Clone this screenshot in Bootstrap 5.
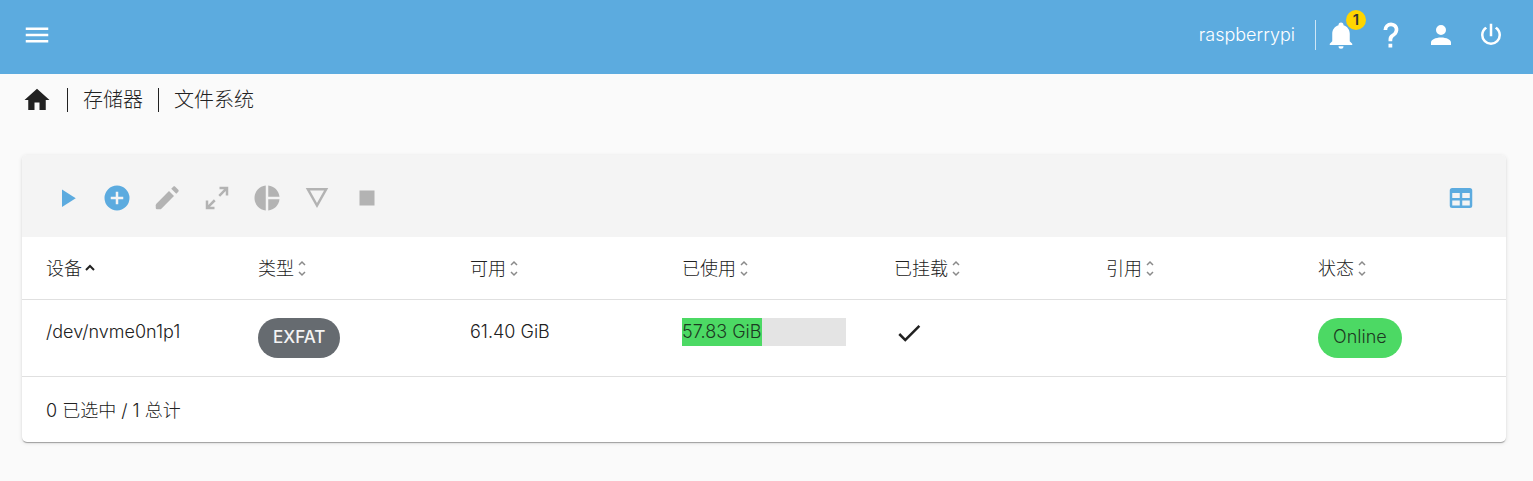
<!DOCTYPE html>
<html lang="zh-CN">
<head>
<meta charset="utf-8">
<meta name="viewport" content="width=device-width, initial-scale=1">
<title>文件系统 - raspberrypi</title>
<link rel="stylesheet" href="https://cdn.jsdelivr.net/npm/bootstrap@5.3.0/dist/css/bootstrap.min.css">
<style>
  body { background: #fafafa; color: #212121; font-family: Inter, "Noto Sans CJK SC", sans-serif; font-size: 18px; line-height: 28px; font-weight: 300; }
  .icon { width: 30px; height: 30px; fill: currentColor; display: block; flex: none; }
  .icon-btn { width: 50px; height: 50px; padding: 10px; border: 0; background: none; color: inherit; position: relative; }
  .icon-btn:disabled { color: #b3b3b3; }
  .topbar { background: #5cabdf; color: #fff; padding: 10px 17px 14px 12px; }
  .host { padding-right: 20px; }
  .host-rule { width: 1px; height: 30px; background: rgba(255,255,255,.7); }
  .count { position: absolute; top: 0; right: 0; width: 20px; height: 20px; border-radius: 50%; background: #ffd500; color: #333; font-size: 15px; line-height: 20px; font-weight: 600; }
  .crumbs { font-size: 20px; line-height: 30px; padding: 11px 22px 0; gap: 15px; }
  .crumbs a { color: inherit; text-decoration: none; }
  .crumbs .rule { width: 1px; height: 24px; background: #212121; }
  .panel { margin: 40px 27px 38px 22px; background: #fff; border-radius: 5px; box-shadow: 0 2px 1px -1px rgba(0,0,0,.2), 0 1px 1px rgba(0,0,0,.14), 0 1px 4px rgba(0,0,0,.12); }
  .tools { background: #f4f4f4; padding: 18px 20px 14px; border-radius: 5px 5px 0 0; }
  .accent { color: #5cabdf; }
  .fs-table { table-layout: fixed; width: 100%; border-collapse: collapse; }
  .fs-table th, .fs-table td { padding: 18px 24px; border-bottom: 1px solid #e0e0e0; font-weight: 300; vertical-align: top; }
  .fs-table th { padding: 18px 24px 16px; }
  .sort { border: 0; padding: 0; background: none; color: inherit; font-weight: inherit; display: flex; align-items: center; gap: 2px; }
  .sort svg { width: 12px; height: 18px; fill: none; stroke: #8a8a8a; stroke-width: 1.5; }
  .sort .on { stroke: #212121; stroke-width: 2; }
  .pill { display: block; width: fit-content; height: 40px; line-height: 38px; border-radius: 20px; padding: 0 15px; }
  .pill-type { background: #666b70; color: #f4f4f4; font-size: 17px; font-weight: 500; }
  .pill-online { background: #4cd964; color: #1d3a22; }
  .usage { position: relative; height: 28px; background: #e4e4e4; }
  .usage-fill { position: absolute; inset: 0 auto 0 0; background: #4cd964; }
  .usage-text { position: relative; color: #1d3a22; }
  .summary { padding: 20px 24px 17px; }
</style>
</head>
<body>
<header class="topbar d-flex align-items-center">
  <button class="icon-btn me-auto" aria-label="菜单"><svg class="icon" viewBox="0 0 24 24"><path d="M3 6h18v2H3V6m0 5h18v2H3v-2m0 5h18v2H3v-2Z"/></svg></button>
  <span class="host">raspberrypi</span>
  <span class="host-rule"></span>
  <button class="icon-btn" aria-label="通知"><svg class="icon" viewBox="0 0 24 24"><path d="M21,19V20H3V19L5,17V11C5,7.9 7.03,5.17 10,4.29C10,4.19 10,4.1 10,4A2,2 0 0,1 12,2A2,2 0 0,1 14,4C14,4.1 14,4.19 14,4.29C16.97,5.17 19,7.9 19,11V17L21,19M14,21A2,2 0 0,1 12,23A2,2 0 0,1 10,21"/></svg><span class="count">1</span></button>
  <button class="icon-btn" aria-label="帮助"><svg class="icon" viewBox="0 0 24 24"><path d="M10,19H13V22H10V19M12,2C17.35,2.22 19.68,7.62 16.5,11.67C15.67,12.67 14.33,13.33 13.67,14.17C13,15 13,16 13,17H10C10,15.33 10,13.92 10.67,12.92C11.33,11.92 12.67,11.33 13.5,10.67C15.92,8.43 15.32,5.26 12,5A3,3 0 0,0 9,8H6A6,6 0 0,1 12,2Z"/></svg></button>
  <button class="icon-btn" aria-label="用户"><svg class="icon" viewBox="0 0 24 24"><path d="M12,4A4,4 0 0,1 16,8A4,4 0 0,1 12,12A4,4 0 0,1 8,8A4,4 0 0,1 12,4M12,14C16.42,14 20,15.79 20,18V20H4V18C4,15.79 7.58,14 12,14Z"/></svg></button>
  <button class="icon-btn" aria-label="电源"><svg class="icon" viewBox="0 0 24 24"><path d="M16.56,5.44L15.11,6.89C16.84,7.94 18,9.83 18,12A6,6 0 0,1 6,12C6,9.83 7.16,7.94 8.88,6.88L7.44,5.44C5.36,6.88 4,9.28 4,12A8,8 0 0,0 20,12C20,9.28 18.64,6.88 16.56,5.44M13,3H11V13H13"/></svg></button>
</header>

<nav class="crumbs d-flex align-items-center" aria-label="路径">
  <a href="#" aria-label="主页"><svg class="icon" viewBox="0 0 24 24"><path d="M10,20V14H14V20H19V12H22L12,3L2,12H5V20H10Z"/></svg></a>
  <span class="rule"></span>
  <a href="#">存储器</a>
  <span class="rule"></span>
  <a href="#">文件系统</a>
</nav>

<main class="panel">
  <div class="tools d-flex">
    <button class="icon-btn accent" aria-label="挂载"><svg class="icon" viewBox="0 0 24 24"><path d="M8,5.14V19.14L19,12.14L8,5.14Z"/></svg></button>
    <button class="icon-btn accent" aria-label="创建"><svg class="icon" viewBox="0 0 24 24"><path d="M17,13H13V17H11V13H7V11H11V7H13V11H17M12,2A10,10 0 0,0 2,12A10,10 0 0,0 12,22A10,10 0 0,0 22,12A10,10 0 0,0 12,2Z"/></svg></button>
    <button class="icon-btn" disabled aria-label="编辑"><svg class="icon" viewBox="0 0 24 24"><path d="M16.84,2.73C16.45,2.73 16.07,2.88 15.77,3.17L13.65,5.29L18.95,10.6L21.07,8.5C21.67,7.89 21.67,6.94 21.07,6.36L17.9,3.17C17.6,2.88 17.22,2.73 16.84,2.73Z" transform="translate(5 .6) scale(.76)"/><path d="M13.6 6.4L3.5 16.5Q3 17 3 17.7V20Q3 21 4 21H6.3Q7 21 7.5 20.5L17.6 10.4Z"/></svg></button>
    <button class="icon-btn" disabled aria-label="扩展"><svg class="icon" viewBox="0 0 24 24"><path d="M10,21V19H6.41L10.91,14.5L9.5,13.09L5,17.59V14H3V21H10M14.5,10.91L19,6.41V10H21V3H14V5H17.59L13.09,9.5L14.5,10.91Z"/></svg></button>
    <button class="icon-btn" disabled aria-label="配额"><svg class="icon" viewBox="0 0 24 24"><path d="M11,2V22C5.9,21.5 2,17.2 2,12C2,6.8 5.9,2.5 11,2M13,2V11H22C21.5,6.2 17.8,2.5 13,2M13,13V22C17.7,21.5 21.5,17.8 22,13H13Z"/></svg></button>
    <button class="icon-btn" disabled aria-label="详情"><svg class="icon" viewBox="0 0 24 24"><path d="M6.38,6H17.63L12,16L6.38,6M3,4L12,20L21,4H3Z"/></svg></button>
    <button class="icon-btn" disabled aria-label="卸载"><svg class="icon" viewBox="0 0 24 24"><path d="M18,18H6V6H18V18Z"/></svg></button>
    <button class="icon-btn accent ms-auto" aria-label="列"><svg class="icon" viewBox="0 0 24 24"><path d="M5,4H19A2,2 0 0,1 21,6V18A2,2 0 0,1 19,20H5A2,2 0 0,1 3,18V6A2,2 0 0,1 5,4M5,8V12H11V8H5M13,8V12H19V8H13M5,14V18H11V14H5M13,14V18H19V14H13Z"/></svg></button>
  </div>
  <table class="fs-table">
    <thead><tr>
      <th scope="col"><button class="sort">设备<svg class="on" viewBox="0 0 12 18"><path d="M2 10l4-4 4 4"/></svg></button></th>
      <th scope="col"><button class="sort">类型<svg viewBox="0 0 12 18"><path d="M3 5l3-3 3 3M3 12l3 3 3-3"/></svg></button></th>
      <th scope="col"><button class="sort">可用<svg viewBox="0 0 12 18"><path d="M3 5l3-3 3 3M3 12l3 3 3-3"/></svg></button></th>
      <th scope="col"><button class="sort">已使用<svg viewBox="0 0 12 18"><path d="M3 5l3-3 3 3M3 12l3 3 3-3"/></svg></button></th>
      <th scope="col"><button class="sort">已挂载<svg viewBox="0 0 12 18"><path d="M3 5l3-3 3 3M3 12l3 3 3-3"/></svg></button></th>
      <th scope="col"><button class="sort">引用<svg viewBox="0 0 12 18"><path d="M3 5l3-3 3 3M3 12l3 3 3-3"/></svg></button></th>
      <th scope="col"><button class="sort">状态<svg viewBox="0 0 12 18"><path d="M3 5l3-3 3 3M3 12l3 3 3-3"/></svg></button></th>
    </tr></thead>
    <tbody><tr>
      <td>/dev/nvme0n1p1</td>
      <td><span class="pill pill-type">EXFAT</span></td>
      <td>61.40 GiB</td>
      <td><div class="usage"><div class="usage-fill" style="width:49%"></div><span class="usage-text">57.83 GiB</span></div></td>
      <td><svg class="icon" viewBox="0 0 24 24"><path d="M21,7L9,19L3.5,13.5L4.91,12.09L9,16.17L19.59,5.59L21,7Z"/></svg></td>
      <td></td>
      <td><span class="pill pill-online">Online</span></td>
    </tr></tbody>
  </table>
  <div class="summary">0 已选中 / 1 总计</div>
</main>
<script src="https://cdn.jsdelivr.net/npm/bootstrap@5.3.0/dist/js/bootstrap.bundle.min.js"></script>
</body>
</html>
